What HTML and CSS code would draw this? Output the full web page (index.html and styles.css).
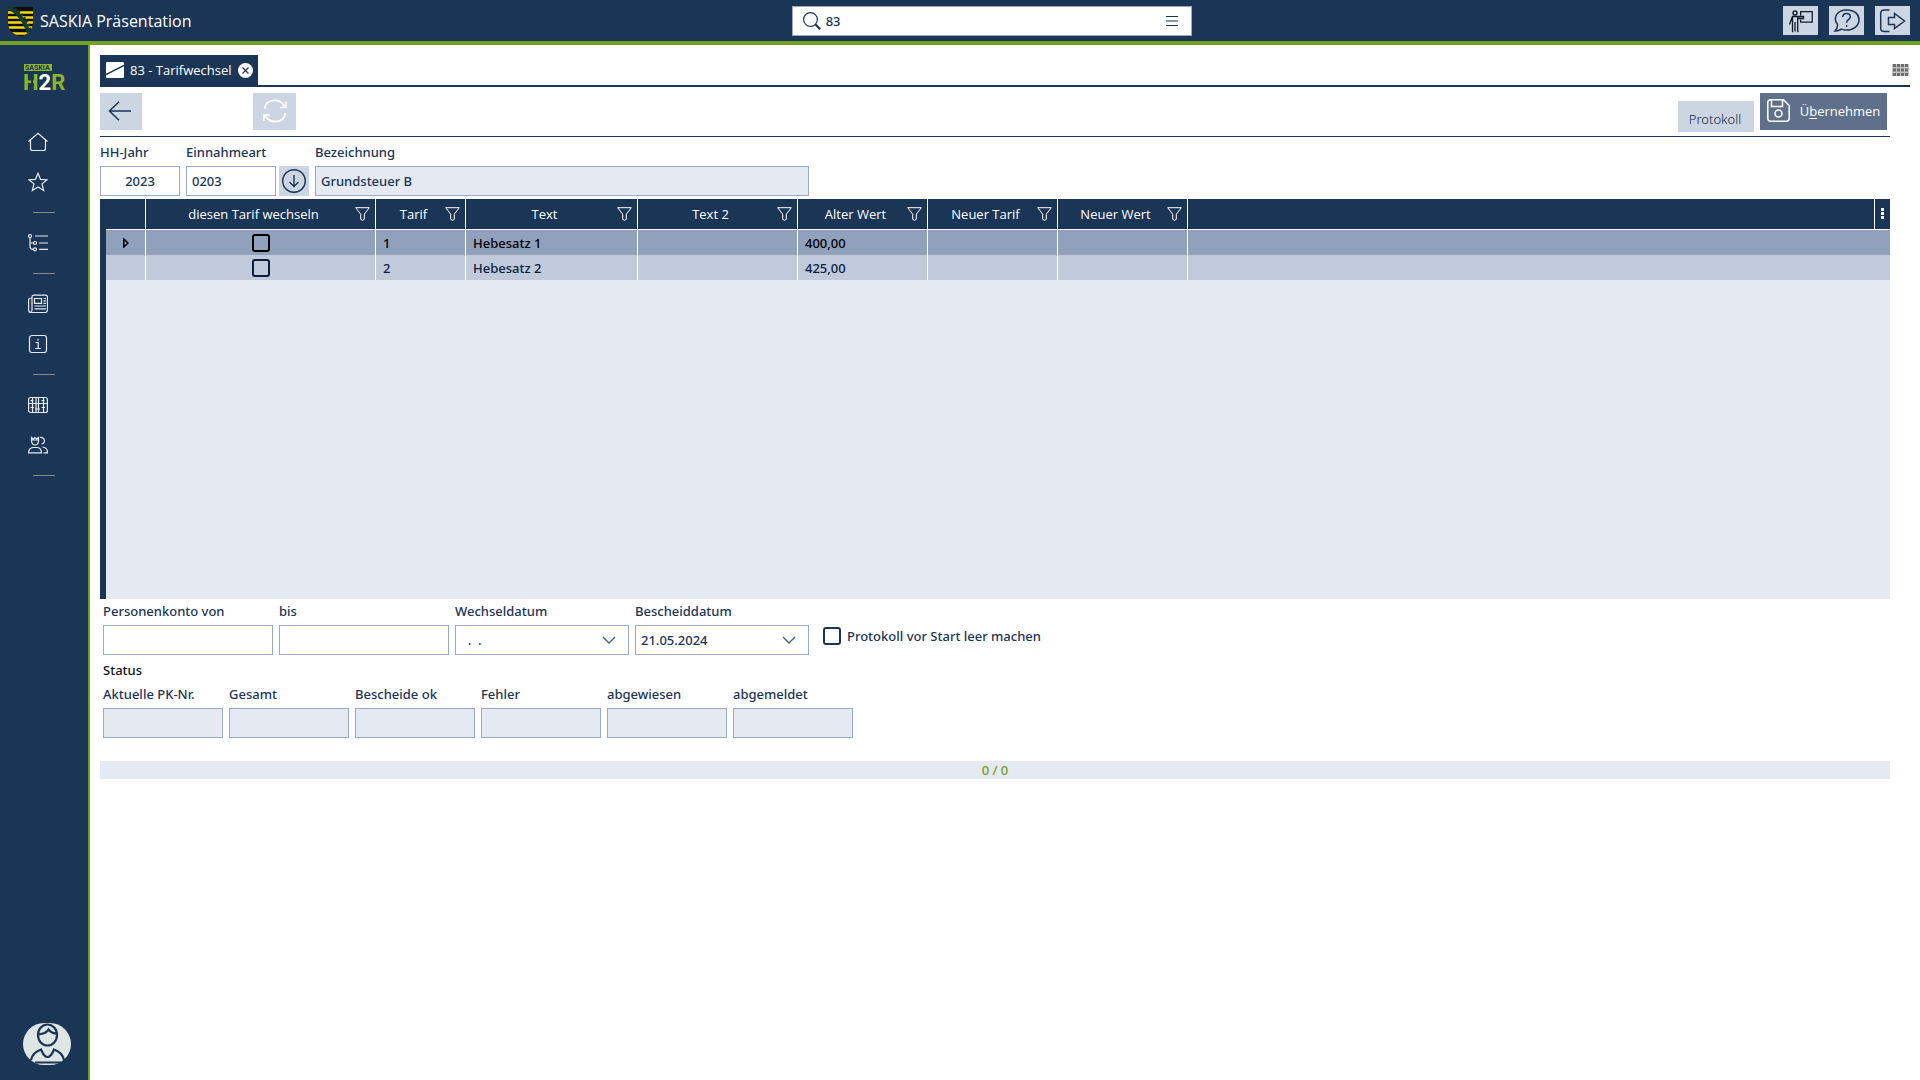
FILE: index.html
```html
<!DOCTYPE html>
<html lang="de">
<head>
<meta charset="utf-8">
<title>SASKIA Präsentation</title>
<link rel="stylesheet" href="styles.css">
</head>
<body>
<svg class="defs" aria-hidden="true">
  <symbol id="i-filter" viewBox="0 0 15 14"><path d="M.7.7h13.6L9.3 7.200v5.100L7.500 13.300 5.700 12.300V7.200z"/></symbol>
  <symbol id="i-chevron" viewBox="0 0 14 8"><path d="M1 1l6 6 6-6"/></symbol>
</svg>

<header class="topbar">
  <div class="brand">
    <svg class="crest" viewBox="0 0 25 29" aria-hidden="true">
      <clipPath id="shield"><path d="M0 0h25v15c0 8-5 13-12.500 14C5 28 0 23 0 15z"/></clipPath>
      <g clip-path="url(#shield)">
        <path fill="#0c0c0c" d="M0 0h25v29H0z"/>
        <path stroke="#ffd800" stroke-width="2.600" d="M0 5.500h25M0 10.500h25M0 15.500h25M0 20.500h25M0 26.500h25"/>
        <path stroke="#0f3f2b" stroke-width="4" fill="none" d="M0 1C9 4 16 13 21 26"/>
        <path stroke="#0f3f2b" stroke-width="3" stroke-dasharray="2 2" fill="none" d="M3 1C12 4 18 12 22 22"/>
      </g>
    </svg>
    <span>SASKIA Präsentation</span>
  </div>
  <div class="search">
    <svg width="18" height="18" viewBox="0 0 18 18" fill="none" stroke="currentColor" aria-hidden="true"><circle cx="7.500" cy="7.500" r="6.900" stroke-width="1.200"/><path d="M12.300 12.300l5 5" stroke-width="2.200"/></svg>
    <input type="text" value="83" aria-label="Suche">
    <button type="button" class="plain" aria-label="Menü"><svg width="12" height="11" viewBox="0 0 12 11" aria-hidden="true"><path fill="#1b3557" d="M0 0h12v1H0zM0 9h12v1H0z"/><path fill="#8797b0" d="M0 4h12v2H0z"/></svg></button>
  </div>
  <div class="top-actions">
    <button type="button" aria-label="Schulung"><svg width="27" height="27" viewBox="0 0 27 27" fill="none" stroke="#111a28" stroke-width="1.300" aria-hidden="true"><circle cx="8" cy="6" r="2"/><path d="M2.500 17.500L5.500 9.500h11v2h-5.500M5.500 9.500v15M8 15v9.500M10.700 9.500v15M5 24.500h1.200M10.300 24.500h1.200M13.700 8.500V4.600h11.500v10.600H13.700v-2.500"/></svg></button>
    <button type="button" aria-label="Hilfe"><svg width="27" height="27" viewBox="0 0 27 27" fill="none" stroke="currentColor" stroke-width="1.500" aria-hidden="true"><path d="M4.500 17.500C-1 10 5 3 13.500 3S26 7.500 26 13s-5 10-12.500 10c-2 0-3.500-.3-5-.9-2 1.400-4 2-6.500 1.900 1.700-1.700 2.700-4 2.500-6.500z"/><path d="M9.700 10c.2-2.400 1.800-3.400 3.800-3.400s3.800 1.200 3.800 3.200c0 2.900-3.700 2.900-3.700 6M13.600 18v1.800"/></svg></button>
    <button type="button" aria-label="Abmelden"><svg width="27" height="27" viewBox="0 0 27 27" fill="none" stroke="currentColor" stroke-width="1.500" aria-hidden="true"><path d="M10.500 3H5.500Q1.700 3 1.700 6v15.500q0 3 3.800 3h5M9.500 10.500h6V6.500l10 7.500-10 7.500v-4h-6z"/></svg></button>
  </div>
</header>

<div class="shell">
  <nav class="sidebar" aria-label="Hauptnavigation">
    <svg class="logo" width="44" height="30" viewBox="0 -2 44 30" role="img" aria-label="SASKIA H2R">
      <path fill="#8db52a" d="M0 0h28v7H0z"/>
      <text x="1" y="6" class="logo-small">SASKIA</text>
      <text x="-1" y="26" class="logo-big">H<tspan class="logo-two">2</tspan>R</text>
      <path fill="#1b3557" d="M7 10h2v16H7z"/>
    </svg>
    <a href="#" aria-label="Start"><svg viewBox="0 0 20 20"><path d="M.5 9.500L10 1.200l9.500 8.300M2.500 8v8.500q0 2 2 2h11q2 0 2-2V8"/></svg></a>
    <a href="#" aria-label="Favoriten"><svg viewBox="0 0 20 20"><path d="M10 1.300l2.500 6 6.500.4-5 4.200 1.700 6.600L10 15l-5.700 3.500L6 11.900 1 7.700l6.500-.4z"/></svg></a>
    <hr>
    <a href="#" aria-label="Struktur"><svg viewBox="0 0 20 20"><circle cx="2" cy="3" r="1.500"/><circle cx="7" cy="10" r="1.500"/><circle cx="7" cy="16.300" r="1.500"/><path d="M2 4.500v9q0 2.800 3 2.800M2 10h3.500M7 3h13M11 10h9M11 16.300h9"/></svg></a>
    <hr>
    <a href="#" aria-label="Nachrichten"><svg viewBox="0 0 20 20"><path d="M4 16V3q0-1.800 2-1.800h11.500q2 0 2 2V16q0 2.500-2.500 2.500H3Q.6 18.500.6 16V6q0-2 3.400-2M4 16q0 2-1.500 2.200M6.500 4.500h7v4.800h-7zM15.500 4.500H18M15.500 6.800H18M15.500 9.300H18M6.500 12H18M6.500 14.800H18"/></svg></a>
    <a href="#" aria-label="Information"><svg viewBox="0 0 20 20"><rect x="1.500" y="1.500" width="17" height="17" rx="2.500"/><path d="M7.500 8.500h2.700v6M7 14.500h6M10 5v1.800"/></svg></a>
    <hr>
    <a href="#" aria-label="Tabellen"><svg viewBox="0 0 20 20"><rect x=".6" y="2.500" width="18.800" height="15" rx="2"/><path d="M.6 8.500h18.800M4.500 3v14M8 3v14M10.500 3v14M15.500 3v14M2.500 12.500h3.500M7 14h5M13.500 12.500h3.500M2.500 5.700h3M13.500 5.700h3"/></svg></a>
    <a href="#" aria-label="Personen"><svg viewBox="0 0 20 20"><path d="M3.500 2.500V6q.5 4 3.500 4t3.500-4V2.500L8.800 4 7 2.500 5.200 4zM3.500 5h7M.6 17.800q0-5.300 5.400-5.300h2.500q5 0 5 5.300zM12 2.500c5-1 6 6 1.500 6.500M14.500 12q5 .5 5 5.800h-4"/></svg></a>
    <hr>
    <button type="button" class="avatar" aria-label="Benutzer"><svg width="48" height="42" viewBox="0 0 48 42" fill="none" stroke="#1b3557" stroke-width="2.200" aria-hidden="true"><rect width="48" height="42" rx="21" fill="#dde6e4" stroke="none"/><ellipse cx="24.500" cy="12" rx="9.500" ry="10.500"/><path d="M15.500 11.500q8-1 10-5 3 4 8.300 4M8 37q1.500-7.500 10-10.500 3 7.500 6.500 7.500t6.500-7.500Q39.500 29.500 41 37M12 39.500h26"/></svg></button>
  </nav>

  <main class="content">
    <div class="tabbar">
      <div class="tab">
        <svg width="18" height="16" viewBox="0 0 18 16" aria-hidden="true"><rect width="18" height="16" rx="1" fill="#fff"/><path d="M0 12.500L18 3.500" stroke="#1b3557" stroke-width="1.500"/></svg>
        <span>83 - Tarifwechsel</span>
        <button type="button" class="plain" aria-label="Schließen"><svg width="15" height="15" viewBox="0 0 15 15" aria-hidden="true"><circle cx="7.500" cy="7.500" r="7.500" fill="#fff"/><path d="M4.500 4.500l6 6M10.500 4.500l-6 6" stroke="#1b3557" stroke-width="1.200"/></svg></button>
      </div>
      <button type="button" class="plain tiles" aria-label="Kacheln"><svg width="17" height="12" viewBox="0 0 17 12" aria-hidden="true"><path fill="#c4c4c4" d="M0 0h17v12H0z"/><path stroke="#6c6c6c" stroke-width="3" stroke-dasharray="3 1" d="M1 1.500h15.500M1 6h15.500M1 10.500h15.500"/></svg></button>
    </div>

    <div class="page">
      <div class="toolbar">
        <button type="button" class="tool back" aria-label="Zurück"><svg width="24" height="20" viewBox="0 0 24 20" fill="none" stroke="currentColor" stroke-width="1.500" aria-hidden="true"><path d="M23 10H1.500M11 .8L1.500 10l9.500 9.200"/></svg></button>
        <button type="button" class="tool refresh" disabled aria-label="Aktualisieren"><svg width="24" height="24" viewBox="0 0 24 24" fill="none" stroke="#fff" stroke-width="1.700" aria-hidden="true"><path d="M1.500 10C3 0 17-2 22 8M22.500 14C21 24 7 26 2 16M23 2.500V8.500h-6M1 22v-6h6"/></svg></button>
        <button type="button" class="protocol">Protokoll</button>
        <button type="button" class="save"><svg width="23" height="23" viewBox="0 0 23 23" fill="none" stroke="#fff" stroke-width="1.500" aria-hidden="true"><path d="M.8 3.500Q.8.800 3.500.8h13l5.700 5.700v13q0 2.700-2.700 2.700h-16Q.8 22.200.8 19.500zM4.500 1v6.500h11V1"/><circle cx="11.500" cy="14.500" r="3.500"/></svg><span>Ü<u>b</u>ernehmen</span></button>
      </div>

      <div class="fields head-fields">
        <div class="field year"><label for="hh">HH-Jahr</label><input id="hh" type="text" value="2023"></div>
        <div class="field kind"><label for="ea">Einnahmeart</label><input id="ea" type="text" value="0203"></div>
        <button type="button" class="pick" aria-label="Einnahmeart auswählen"><svg width="24" height="24" viewBox="0 0 24 24" fill="none" stroke="currentColor" stroke-width="1.400" aria-hidden="true"><circle cx="12" cy="12" r="11.300"/><path d="M12 6v11.500M7.500 13l4.500 4.500 4.500-4.500"/></svg></button>
        <div class="field title"><label for="bz">Bezeichnung</label><input id="bz" type="text" value="Grundsteuer B" readonly></div>
      </div>

      <div class="grid">
        <table>
          <colgroup><col class="c-mark"><col class="c-switch"><col class="c-tariff"><col class="c-text"><col class="c-text2"><col class="c-value"><col class="c-value"><col class="c-value"><col><col class="c-menu"></colgroup>
          <thead>
            <tr>
              <th></th>
              <th><div><span>diesen Tarif wechseln</span><svg><use href="#i-filter"/></svg></div></th>
              <th><div><span>Tarif</span><svg><use href="#i-filter"/></svg></div></th>
              <th><div><span>Text</span><svg><use href="#i-filter"/></svg></div></th>
              <th><div><span>Text 2</span><svg><use href="#i-filter"/></svg></div></th>
              <th><div><span>Alter Wert</span><svg><use href="#i-filter"/></svg></div></th>
              <th><div><span>Neuer Tarif</span><svg><use href="#i-filter"/></svg></div></th>
              <th><div><span>Neuer Wert</span><svg><use href="#i-filter"/></svg></div></th>
              <th></th>
              <th class="menu"><button type="button" class="plain" aria-label="Spalten"><svg class="dots" viewBox="0 0 3 12"><path d="M0 0h3v3H0zM0 4h3v3H0zM0 8h3v3H0z"/></svg></button></th>
            </tr>
          </thead>
          <tbody>
            <tr class="current">
              <td class="mark"><svg width="6" height="10" viewBox="0 0 6 10" fill="none" stroke="#000" stroke-width="1.500" aria-hidden="true"><path d="M.8 1v8l4.200-4z"/></svg></td>
              <td class="mark"><input type="checkbox" aria-label="Tarif 1 wechseln"></td>
              <td>1</td><td>Hebesatz 1</td><td></td><td>400,00</td><td></td><td></td><td colspan="2"></td>
            </tr>
            <tr>
              <td class="mark"></td>
              <td class="mark"><input type="checkbox" aria-label="Tarif 2 wechseln"></td>
              <td>2</td><td>Hebesatz 2</td><td></td><td>425,00</td><td></td><td></td><td colspan="2"></td>
            </tr>
          </tbody>
        </table>
      </div>

      <div class="lower">
        <div class="fields">
          <div class="field account"><label for="von">Personenkonto von</label><input id="von" type="text"></div>
          <div class="field account"><label for="bis">bis</label><input id="bis" type="text"></div>
          <div class="field date"><label for="wd">Wechseldatum</label><div class="combo"><input id="wd" type="text" value="  .  ."><button type="button" class="plain" aria-label="Kalender"><svg><use href="#i-chevron"/></svg></button></div></div>
          <div class="field date"><label for="bd">Bescheiddatum</label><div class="combo"><input id="bd" type="text" value="21.05.2024"><button type="button" class="plain" aria-label="Kalender"><svg><use href="#i-chevron"/></svg></button></div></div>
          <label class="check"><input type="checkbox"><span>Protokoll vor Start leer machen</span></label>
        </div>
        <h2>Status</h2>
        <div class="fields">
          <div class="field state"><label for="s1">Aktuelle PK-Nr.</label><input id="s1" type="text" readonly></div>
          <div class="field state"><label for="s2">Gesamt</label><input id="s2" type="text" readonly></div>
          <div class="field state"><label for="s3">Bescheide ok</label><input id="s3" type="text" readonly></div>
          <div class="field state"><label for="s4">Fehler</label><input id="s4" type="text" readonly></div>
          <div class="field state"><label for="s5">abgewiesen</label><input id="s5" type="text" readonly></div>
          <div class="field state"><label for="s6">abgemeldet</label><input id="s6" type="text" readonly></div>
        </div>
      </div>
      <div class="progress" role="status">0 / 0</div>
    </div>
  </main>
</div>
</body>
</html>
```

FILE: styles.css
```css
:root {
  --navy: #1b3557;
  --green: #72a022;
  --button: #ccd5e2;
  --panel: #e5e9f1;
  --line: #9aaac4;
}

* { box-sizing: border-box; }

body {
  margin: 0;
  min-height: 100vh;
  display: flex;
  flex-direction: column;
  background: #fff;
  color: var(--navy);
  font: 500 13px/18px "Noto Sans", "Open Sans", sans-serif;
}

button, input { font: inherit; color: inherit; border-radius: 0; }
button { border: 0; padding: 0; background: var(--button); display: flex; align-items: center; justify-content: center; }
svg { display: block; flex: none; }
.plain { background: none; }
.defs { display: none; }
.brand, .tab, .save, th { font-family: "Open Sans", "Noto Sans", sans-serif; }

.topbar {
  display: grid;
  grid-template-columns: 12fr 400px 11fr;
  align-items: start;
  height: 45px;
  padding: 6px 10px 0 8px;
  background: var(--navy);
  border-bottom: 4px solid var(--green);
}
.brand { display: flex; align-items: center; gap: 7px; height: 30px; color: #fff; font-size: 16px; font-weight: 400; }
.crest { width: 25px; height: 29px; }
.search { display: flex; align-items: center; gap: 5px; height: 30px; padding: 0 13px 0 10px; background: #fff; border: 1px solid var(--line); }
.search input { flex: 1; min-width: 0; border: 0; padding: 0; outline: 0; }
.top-actions { display: flex; justify-content: flex-end; gap: 11px; }
.top-actions button { width: 35px; height: 29px; }

.shell { flex: 1; display: flex; }

.sidebar {
  display: flex;
  flex-direction: column;
  width: 90px;
  padding: 17px 0 15px;
  background: var(--navy);
  border-right: 2px solid var(--green);
}
.logo { margin: 0 0 30px 24px; overflow: visible; }
.logo-small { font: 700 7px Roboto, sans-serif; fill: var(--navy); }
.logo-big { font: 700 22px Roboto, sans-serif; fill: #8db52a; }
.logo-big .logo-two { fill: #fff; }
.sidebar a { display: flex; align-items: center; height: 40px; padding-left: 28px; }
.sidebar a svg { width: 20px; height: 20px; fill: none; stroke: #e6ebf2; stroke-width: 1.2; }
.sidebar hr { width: 22px; height: 1px; margin: 10px 0 10px 33px; border: 0; background: #8a8a8a; }
.avatar { width: 48px; height: 42px; margin: auto 0 0 23px; background: none; }

.content { flex: 1; min-width: 0; padding: 10px 10px 0; }
.tabbar { display: flex; justify-content: space-between; height: 32px; border-bottom: 2px solid var(--navy); }
.tab { display: flex; align-items: center; gap: 6px; height: 30px; padding: 0 5px 0 6px; background: var(--navy); color: #fff; }
.tiles { height: 22px; padding: 8px 1px 0 0; }

.page { margin-right: 20px; }
.toolbar { display: flex; align-items: flex-start; gap: 6px; height: 50px; padding: 6px 3px 0 0; border-bottom: 1px solid var(--navy); }
.tool { width: 43px; height: 37px; padding-bottom: 2px; }
.back { width: 42px; padding-right: 2px; }
.refresh { margin-left: 105px; }
.protocol { width: 76px; height: 31px; margin: 8px 0 0 auto; padding: 4px 2px 0 0; font-weight: 300; color: #0f2747; }
.save { width: 127px; height: 37px; gap: 10px; padding-bottom: 2px; background: #5f718a; color: #fff; }
.save u { text-underline-offset: 2px; }

.fields { display: flex; align-items: flex-end; gap: 6px; }
.head-fields { padding: 6px 0 3px; }
.field label { display: block; margin-bottom: 5px; }
.field input { display: block; width: 100%; height: 30px; padding: 0 5px; background: #fff; border: 1px solid var(--line); outline: 0; }
.field input:read-only { background: var(--panel); }
.year { width: 80px; }
.year input { text-align: center; }
.kind { width: 90px; }
.title { width: 494px; }
.pick { width: 30px; height: 30px; margin-left: -3px; }

.grid { height: 400px; border-left: 6px solid var(--navy); background: var(--panel); }
table { width: 100%; table-layout: fixed; border-collapse: separate; border-spacing: 0; }
.c-mark { width: 40px; }
.c-switch { width: 230px; }
.c-tariff { width: 90px; }
.c-text { width: 172px; }
.c-text2 { width: 160px; }
.c-value { width: 130px; }
.c-menu { width: 15px; }
th { height: 31px; padding: 0 5px 0 0; background: var(--navy); color: #fff; font-weight: 500; border-right: 1px solid #fff; border-bottom: 1px solid #fff; }
th div { display: flex; align-items: center; }
th span { flex: 1; padding-left: 6px; text-align: center; }
th svg { width: 15px; height: 14px; fill: none; stroke: #fff; }
th.menu { padding: 0; border-right: 0; }
th.menu button { width: 100%; }
th svg.dots { width: 3px; height: 12px; fill: #fff; stroke: none; }
td { height: 25px; padding: 0 7px; background: #c0cadb; color: #0b1d3d; border-right: 1px solid #fff; }
td:last-child { border-right: 0; }
.current td { background: #91a1bb; color: #000; }
td.mark { padding: 0; }
.mark svg, .mark input { margin: 0 auto; }

input[type="checkbox"] { appearance: none; display: block; flex: none; width: 18px; height: 18px; border: 2px solid currentColor; border-radius: 3px; }

.lower { padding: 3px 3px 23px; }
.account { width: 170px; }
.date { width: 174px; }
.state { width: 120px; }
.combo { display: flex; align-items: center; background: #fff; border: 1px solid var(--line); }
.combo input { flex: 1; min-width: 0; height: 28px; border: 0; white-space: pre; }
.combo button { width: 38px; height: 28px; }
.combo svg { width: 14px; height: 8px; fill: none; stroke: #4c6080; stroke-width: 1.4; }
.check { display: flex; align-items: center; gap: 6px; margin: 0 0 10px 8px; }
.check input { margin: 0; }
h2 { margin: 6px 0; font: inherit; color: #0d1420; }
.progress { height: 18px; background: var(--panel); color: var(--green); text-align: center; }
```
